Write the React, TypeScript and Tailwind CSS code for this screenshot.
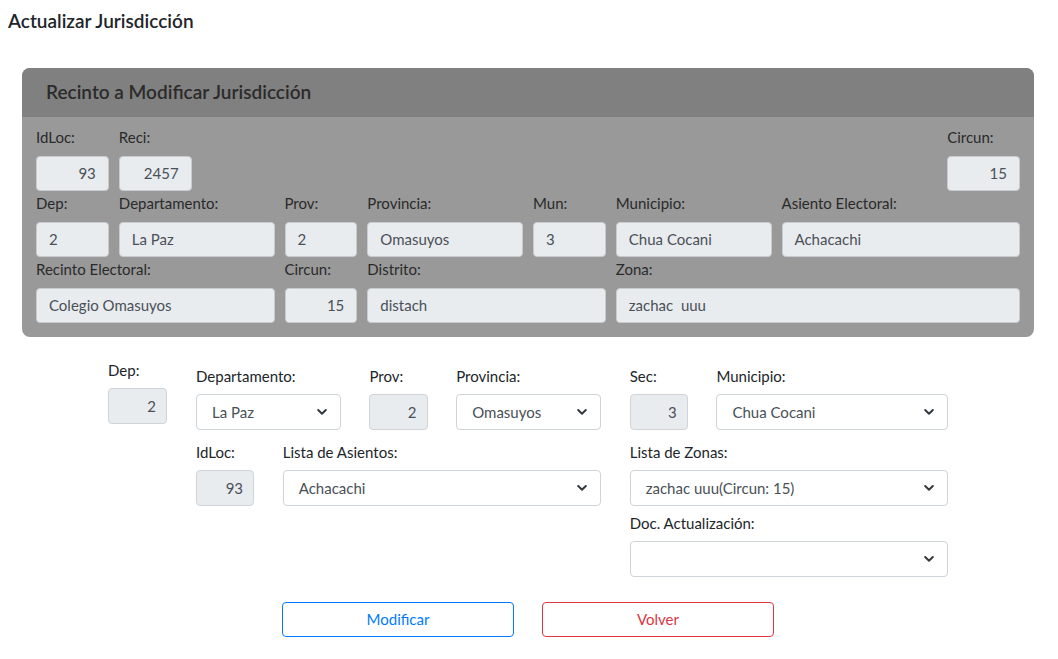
import React from "react"

const font = { fontFamily: '"Segoe UI", Lato, "Noto Sans", sans-serif' }

function Chevron() {
  return (
    <svg width="10" height="7" viewBox="0 0 10 7" className="absolute right-[13px] top-1/2 -translate-y-1/2">
      <path d="M1.2 1.5 L5 5.2 L8.8 1.5" fill="none" stroke="#343a40" strokeWidth="2" strokeLinecap="round" strokeLinejoin="round" />
    </svg>
  )
}

function CardField({ label, value, span, right }: { label: string; value: string; span: string; right?: boolean }) {
  return (
    <div className={span}>
      <div className="h-[22px] leading-[22px] text-[15px] text-[#2a2a2a] mb-[8px]">{label}</div>
      <div
        className={`h-[35px] rounded-[4px] border border-[#c8ccd0] bg-[#e9ecef] px-[12px] flex items-center whitespace-pre text-[15px] text-[#495057] ${right ? "justify-end" : ""}`}
      >
        {value}
      </div>
    </div>
  )
}

function Label({ children }: { children: React.ReactNode }) {
  return <div className="h-[22px] leading-[22px] text-[15px] text-[#212529] mb-[7px]">{children}</div>
}

function ReadBox({ value }: { value: string }) {
  return (
    <div className="h-[36px] rounded-[4px] border border-[#ced4da] bg-[#e9ecef] px-[10px] flex items-center justify-end text-[15px] text-[#495057]">
      {value}
    </div>
  )
}

function Select({ value }: { value: string }) {
  return (
    <div className="relative h-[36px] rounded-[4px] border border-[#ced4da] bg-white pl-[15px] pr-[30px] flex items-center text-[15px] text-[#495057]">
      {value}
      <Chevron />
    </div>
  )
}

export default function App() {
  return (
    <div className="min-h-screen bg-white" style={font}>
      <h1 className="pl-[8px] pt-[9px] text-[19px] font-semibold text-[#212529] leading-[24px]">Actualizar Jurisdicción</h1>

      <div className="ml-[22px] mr-[24px] mt-[35px] rounded-[8px] overflow-hidden bg-[#999999]">
        <div className="h-[49px] bg-[#808080] pl-[24px] flex items-center text-[19px] font-semibold text-[#2b2b2b]">
          Recinto a Modificar Jurisdicción
        </div>
        <div className="px-[14px] pt-[9px] pb-[14px]">
          <div className="grid grid-cols-12 gap-x-[10px] gap-y-[1px]">
            <CardField label="IdLoc:" value="93" span="col-span-1" right />
            <CardField label="Reci:" value="2457" span="col-span-1" right />
            <div className="col-span-9" />
            <CardField label="Circun:" value="15" span="col-span-1" right />

            <CardField label="Dep:" value="2" span="col-span-1" />
            <CardField label="Departamento:" value="La Paz" span="col-span-2" />
            <CardField label="Prov:" value="2" span="col-span-1" />
            <CardField label="Provincia:" value="Omasuyos" span="col-span-2" />
            <CardField label="Mun:" value="3" span="col-span-1" />
            <CardField label="Municipio:" value="Chua Cocani" span="col-span-2" />
            <CardField label="Asiento Electoral:" value="Achacachi" span="col-span-3" />

            <CardField label="Recinto Electoral:" value="Colegio Omasuyos" span="col-span-3" />
            <CardField label="Circun:" value="15" span="col-span-1" right />
            <CardField label="Distrito:" value="distach" span="col-span-3" />
            <CardField label="Zona:" value="zachac  uuu" span="col-span-5" />
          </div>
        </div>
      </div>

      <div className="ml-[108px] w-[840px] mt-[22px] flex gap-x-[29px]">
        <div className="w-[59px] shrink-0">
          <Label>Dep:</Label>
          <ReadBox value="2" />
        </div>
        <div className="flex-1 pt-[6px] grid grid-cols-9 gap-x-[28.7px]">
          <div className="col-span-2">
            <Label>Departamento:</Label>
            <Select value="La Paz" />
          </div>
          <div className="col-span-1">
            <Label>Prov:</Label>
            <ReadBox value="2" />
          </div>
          <div className="col-span-2">
            <Label>Provincia:</Label>
            <Select value="Omasuyos" />
          </div>
          <div className="col-span-1">
            <Label>Sec:</Label>
            <ReadBox value="3" />
          </div>
          <div className="col-span-3">
            <Label>Municipio:</Label>
            <Select value="Chua Cocani" />
          </div>

          <div className="col-span-1 mt-[11px]">
            <Label>IdLoc:</Label>
            <ReadBox value="93" />
          </div>
          <div className="col-span-4 mt-[11px]">
            <Label>Lista de Asientos:</Label>
            <Select value="Achacachi" />
          </div>
          <div className="col-span-4 mt-[11px]">
            <Label>Lista de Zonas:</Label>
            <Select value="zachac uuu(Circun: 15)" />
          </div>

          <div className="col-span-5" />
          <div className="col-span-4 mt-[6px]">
            <Label>Doc. Actualización:</Label>
            <Select value="" />
          </div>
        </div>
      </div>

      <div className="mt-[25px] flex justify-center gap-x-[28px] pr-[2px]">
        <button className="w-[232px] h-[35px] rounded-[4px] border border-[#007bff] text-[#007bff] text-[15px] bg-white">
          Modificar
        </button>
        <button className="w-[232px] h-[35px] rounded-[4px] border border-[#dc3545] text-[#dc3545] text-[15px] bg-white">
          Volver
        </button>
      </div>
    </div>
  )
}
